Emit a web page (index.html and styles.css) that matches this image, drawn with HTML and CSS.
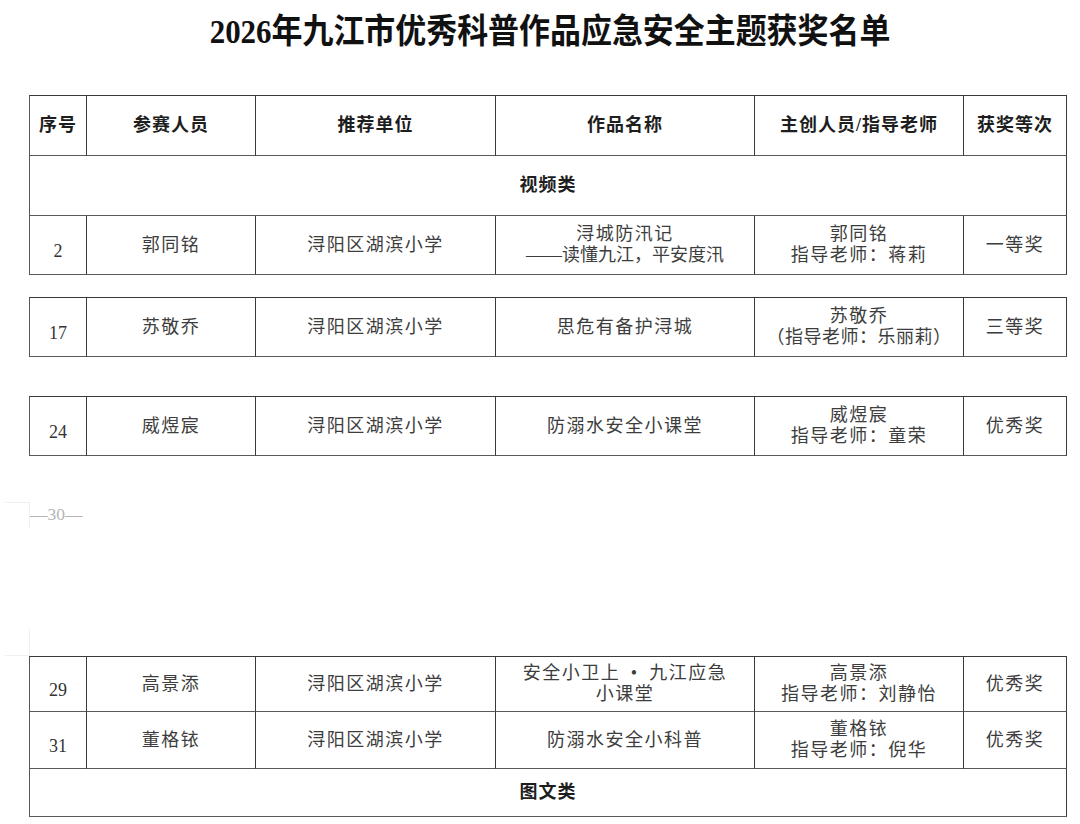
FILE: index.html
```html
<!DOCTYPE html>
<html lang="zh-CN">
<head>
<meta charset="utf-8">
<title>2026年九江市优秀科普作品应急安全主题获奖名单</title>
<link rel="stylesheet" href="styles.css">
</head>
<body>
<h1 class="title"><span class="title-text">2026年九江市优秀科普作品应急安全主题获奖名单</span></h1>

<div class="block block-first">
  <div class="cell head h60">序号</div>
  <div class="cell head h60">参赛人员</div>
  <div class="cell head h60">推荐单位</div>
  <div class="cell head h60">作品名称</div>
  <div class="cell head h60">主创人员/指导老师</div>
  <div class="cell head h60">获奖等次</div>

  <div class="cell head span h60">视频类</div>

  <div class="cell num h59">2</div>
  <div class="cell h59">郭同铭</div>
  <div class="cell h59">浔阳区湖滨小学</div>
  <div class="cell h59 two"><span>浔城防汛记</span><span class="tight">——读懂九江，平安度汛</span></div>
  <div class="cell h59 two"><span>郭同铭</span><span>指导老师：蒋莉</span></div>
  <div class="cell h59">一等奖</div>
</div>

<div class="block block-second">
  <div class="cell num h59">17</div>
  <div class="cell h59">苏敬乔</div>
  <div class="cell h59">浔阳区湖滨小学</div>
  <div class="cell h59">思危有备护浔城</div>
  <div class="cell h59 two"><span>苏敬乔</span><span class="paren">（指导老师：乐丽莉）</span></div>
  <div class="cell h59">三等奖</div>
</div>

<div class="block block-third">
  <div class="cell num h59">24</div>
  <div class="cell h59">威煜宸</div>
  <div class="cell h59">浔阳区湖滨小学</div>
  <div class="cell h59">防溺水安全小课堂</div>
  <div class="cell h59 two"><span>威煜宸</span><span>指导老师：童荣</span></div>
  <div class="cell h59">优秀奖</div>
</div>

<div class="pagebreak">
  <div class="page-edge"></div>
  <div class="page-num">—30—</div>
  <div class="page-edge page-edge-bottom"></div>
</div>

<div class="block block-fourth">
  <div class="cell num h55">29</div>
  <div class="cell h55">高景添</div>
  <div class="cell h55">浔阳区湖滨小学</div>
  <div class="cell h55 two"><span>安全小卫上&ensp;•&ensp;九江应急</span><span>小课堂</span></div>
  <div class="cell h55 two"><span>高景添</span><span>指导老师：刘静怡</span></div>
  <div class="cell h55">优秀奖</div>

  <div class="cell num h57">31</div>
  <div class="cell h57">董格铱</div>
  <div class="cell h57">浔阳区湖滨小学</div>
  <div class="cell h57">防溺水安全小科普</div>
  <div class="cell h57 two"><span>董格铱</span><span>指导老师：倪华</span></div>
  <div class="cell h57">优秀奖</div>

  <div class="cell head span h48">图文类</div>
</div>
</body>
</html>
```

FILE: styles.css
```css
html, body {
  margin: 0;
  padding: 0;
  background: #ffffff;
}

body {
  width: 1080px;
  font-family: "Liberation Serif", "Noto Sans CJK SC", serif;
  color: #3a3a3a;
}

.title {
  margin: 0;
  height: 95px;
  box-sizing: border-box;
  padding-top: 11px;
  padding-left: 20px;
  font-size: 34px;
  line-height: 42px;
  font-weight: 700;
  text-align: center;
  color: #111;
  white-space: nowrap;
}

.title-text {
  display: inline-block;
  transform: scaleX(0.91);
  transform-origin: center;
}

.block {
  display: grid;
  grid-template-columns: 57px 169px 240px 259px 209px 103px;
  width: 1038px;
  margin-left: 29px;
  box-sizing: border-box;
  border-top: 1px solid #3a3a3a;
  border-left: 1px solid #555;
}

.block-second { margin-top: 22px; }
.block-third { margin-top: 39px; }

.cell {
  box-sizing: border-box;
  border-right: 1px solid #3a3a3a;
  border-bottom: 1px solid #5a5a5a;
  display: flex;
  flex-direction: column;
  align-items: center;
  justify-content: center;
  text-align: center;
  font-size: 18px;
  line-height: 21px;
  letter-spacing: 1.5px;
  color: #3d3d3d;
  white-space: nowrap;
}

.head {
  font-weight: 700;
  color: #1e1e1e;
  letter-spacing: 1px;
}

.span {
  grid-column: 1 / -1;
}

.num {
  padding-top: 12px;
  letter-spacing: 0;
  color: #333;
}

.two span {
  display: block;
}

.two .tight {
  letter-spacing: 0;
}

.paren {
  letter-spacing: 0.5px;
}

.h60 { height: 60px; }
.h59 { height: 59px; }
.h57 { height: 57px; }
.h55 { height: 55px; }
.h48 { height: 48px; }

.pagebreak {
  height: 200px;
  display: flex;
  flex-direction: column;
}

.page-edge {
  margin-top: 46px;
  margin-left: 5px;
  width: 24px;
  height: 26px;
  border-top: 1px solid #f0f0f0;
  border-right: 1px solid #f0f0f0;
}

.page-edge-bottom {
  margin-top: auto;
  height: 26px;
  border-top: none;
  border-bottom: 1px solid #f0f0f0;
}

.page-num {
  margin-top: -25px;
  margin-left: 30px;
  font-size: 17.5px;
  line-height: 20px;
  color: #b5b5b5;
  letter-spacing: 0;
}
```
